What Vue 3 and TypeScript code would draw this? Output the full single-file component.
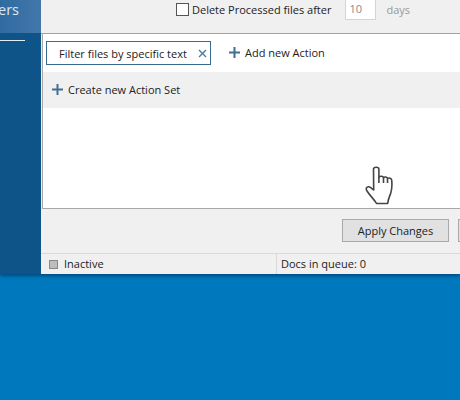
<script setup lang="ts">
defineOptions({ name: 'ActionSets' })
</script>

<template>
  <div class="desktop">
    <div class="window">
      <aside class="sidebar">
        <div class="nav-active"><span>ers</span></div>
        <div class="nav-rule" />
      </aside>
      <main class="main">
        <div class="options">
          <span class="check" />
          <span class="option-label">Delete Processed files after</span>
          <span class="days-input">10</span>
          <span class="days">days</span>
        </div>
        <div class="panel">
          <div class="action-row">
            <div class="tab">
              <span>Filter files by specific text</span>
              <svg class="close" width="9" height="9" viewBox="0 0 9 9">
                <path d="M1 1l7 7M8 1L1 8" />
              </svg>
            </div>
            <button class="add add-action">
              <svg class="plus" width="11" height="11" viewBox="0 0 11 11">
                <path d="M5.5 0v11M0 5.5h11" />
              </svg>
              Add new Action
            </button>
          </div>
          <div class="set-row">
            <button class="add">
              <svg class="plus" width="11" height="11" viewBox="0 0 11 11">
                <path d="M5.5 0v11M0 5.5h11" />
              </svg>
              Create new Action Set
            </button>
          </div>
        </div>
        <div class="footer">
          <button class="apply">Apply Changes</button>
          <button class="next" />
        </div>
        <div class="status">
          <div class="status-left"><span class="led" />Inactive</div>
          <div class="status-right">Docs in queue: 0</div>
        </div>
      </main>
    </div>
    <svg class="cursor" width="29" height="40" viewBox="-1 -1 29 40">
      <path
        d="M7.5 2.2c0-2.6 5.4-2.6 5.4 0V10c1.500-1.200 4-.9 4.600.5 1.400-1 3.600-.6 4 .9 1.600-.9 4-.2 4.200 1.800.4 4 .3 9-1 13-.9 3-2.400 5-3 10.300H10.500C8.500 32.500 4.500 29.500 1 24c-1.500-2.300-.5-4.500 1.800-4.300 1.500.2 3.400 2 4.900 3.300z"
      />
      <path d="M12.900 10v6M17.500 10.500V16M21.500 11.400V16" />
    </svg>
  </div>
</template>

<style scoped>
.desktop {
  position: relative;
  width: 460px;
  height: 400px;
  overflow: hidden;
  background: #0078bd;
  font-family: "Open Sans", "Noto Sans", sans-serif;
  font-size: 11px;
  color: #222;
}

.window {
  display: flex;
  height: 274px;
  box-shadow: 0 2px 3px rgba(0, 40, 80, 0.55);
}

.sidebar {
  flex: 0 0 41px;
  min-width: 0;
  background: #0f5488;
}

.nav-active {
  display: flex;
  justify-content: flex-end;
  height: 33px;
  padding-right: 22px;
  background: linear-gradient(90deg, #2f6ba1, #4377aa);
  color: #dce8f2;
  font-size: 14.5px;
  line-height: 19px;
  overflow: hidden;
}

.nav-rule {
  height: 1px;
  width: 25px;
  margin-top: 7px;
  background: #e4edf4;
}

.main {
  flex: 1;
  display: flex;
  flex-direction: column;
  min-width: 0;
  background: #f0f0f0;
}

.options {
  display: flex;
  align-items: flex-start;
  height: 33px;
  flex: none;
  padding-left: 135px;
  border-bottom: 1px solid #a3a3a3;
  box-sizing: content-box;
}

.check {
  width: 11px;
  height: 11px;
  margin-top: 3px;
  border: 1px solid #555;
  background: #fff;
}

.option-label {
  margin-left: 3px;
  line-height: 20px;
}

.days-input {
  box-sizing: border-box;
  width: 31px;
  height: 20px;
  margin-left: 14px;
  padding-left: 3px;
  border: 1px solid #d4d4d4;
  border-top: 0;
  background: #fff;
  color: #888;
  line-height: 18px;
}

.days {
  margin-left: 10px;
  color: #999;
  line-height: 20px;
}

.panel {
  flex: 1;
  margin-left: 1px;
  border-left: 1px solid #a8a8a8;
  border-bottom: 1px solid #a8a8a8;
  background: #fff;
}

.action-row {
  display: flex;
  align-items: center;
  height: 38px;
  padding-left: 3px;
}

.tab {
  box-sizing: border-box;
  display: flex;
  align-items: center;
  justify-content: space-between;
  width: 165px;
  height: 24px;
  padding: 0 3px 0 12px;
  border: 1px solid #3a6b8e;
}

.close {
  fill: none;
  stroke: #4a7a9c;
  stroke-width: 1.4;
}

.add {
  display: flex;
  align-items: center;
  gap: 5px;
  padding: 0 0 2px;
  border: 0;
  background: none;
  color: #222;
  font: inherit;
}

.add-action {
  margin-left: 18px;
}

.plus {
  fill: none;
  stroke: #3f6f92;
  stroke-width: 2;
}

.set-row {
  display: flex;
  align-items: center;
  height: 36px;
  padding-left: 9px;
  background: #f0f0f0;
}

.footer {
  display: flex;
  flex: none;
  gap: 9px;
  height: 44px;
  padding: 10px 0 0 301px;
  box-sizing: border-box;
  overflow: hidden;
}

.apply {
  flex: none;
  box-sizing: border-box;
  width: 107px;
  height: 23px;
  border: 1px solid #a9a9a9;
  background: #e1e1e1;
  color: #222;
  font: inherit;
}

.next {
  flex: none;
  width: 40px;
  height: 23px;
  padding: 0;
  border: 1px solid #a9a9a9;
  background: #e1e1e1;
}

.status {
  display: flex;
  flex: none;
  height: 21px;
  border-top: 1px solid #d9d9d9;
  box-sizing: border-box;
  line-height: 20px;
}

.status-left {
  display: flex;
  align-items: center;
  width: 236px;
  padding-left: 8px;
  box-sizing: border-box;
  border-right: 1px solid #d9d9d9;
}

.led {
  box-sizing: border-box;
  width: 9px;
  height: 9px;
  margin-right: 6px;
  border: 1px solid #888;
  background: #bdbdbd;
}

.status-right {
  padding-left: 4px;
}

.cursor {
  position: absolute;
  left: 365px;
  top: 166px;
  fill: #fff;
  stroke: #444;
  stroke-width: 1.6;
  stroke-linejoin: round;
}
</style>
